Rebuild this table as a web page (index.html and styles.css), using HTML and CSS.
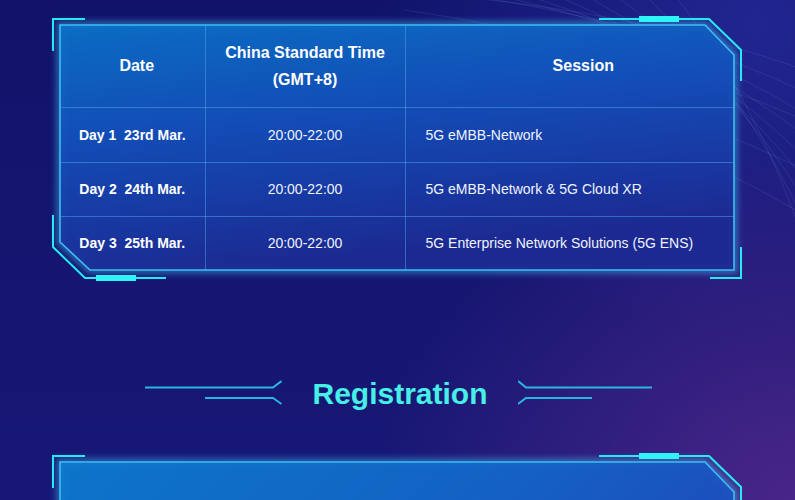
FILE: index.html
```html
<!DOCTYPE html>
<html>

<head>
    <meta charset="utf-8" />
    <title>Schedule</title>
    <link rel="stylesheet" href="styles.css">
</head>

<body>

<div class="page">
    <!-- background streaks -->
    <svg class="streaks" width="420" height="340" viewBox="0 0 420 340">
        <path d="M60 -5 Q260 10 430 70" />
        <path d="M90 -5 Q280 22 430 92" />
        <path d="M120 -5 Q300 34 430 114" />
        <path d="M150 -5 Q315 46 430 136" />
        <path d="M180 -5 Q330 58 430 158" />
        <path d="M210 -5 Q345 70 430 180" />
        <path d="M240 -5 Q360 82 430 202" />
        <path d="M270 -5 Q372 94 430 224" />
        <path d="M300 -5 Q385 106 430 246" />
        <path d="M30 10 Q240 40 430 120" />
        <path d="M0 30 Q220 70 430 170" />
        <path d="M20 60 Q230 100 430 215" />
    </svg>

    <div class="panel">
        <svg class="frame" width="710" height="280" viewBox="0 0 710 280">
            <defs>
                <linearGradient id="fillA" x1="0" y1="0" x2="0.3" y2="1">
                    <stop offset="0" stop-color="#0a72c9" />
                    <stop offset="0.45" stop-color="#134fba" />
                    <stop offset="1" stop-color="#1c2a93" />
                </linearGradient>
                <filter id="blur" x="-10%" y="-10%" width="120%" height="120%">
                    <feGaussianBlur stdDeviation="3" />
                </filter>
            </defs>
            <polygon class="halo" points="20,15 665,15 694,45 694,260 50,260 20,232" />
            <polygon class="body" fill="url(#fillA)" points="20,15 665,15 694,45 694,260 50,260 20,232" />
            <polygon class="edge" points="20,15 665,15 694,45 694,260 50,260 20,232" />
            <polyline class="bracket" points="13,41 13,9 45,9" />
            <polyline class="bracket" points="559,9 669,9 701,40 701,71" />
            <polyline class="bracket" points="13,205 13,237 45,268 126,268" />
            <polyline class="bracket" points="701,237 701,268 670,268" />
            <rect class="tab" x="599" y="6" width="40" height="6" />
            <rect class="tab" x="56" y="265" width="40" height="6" />
        </svg>

        <table class="schedule">
            <colgroup>
                <col class="c1">
                <col class="c2">
                <col class="c3">
            </colgroup>
            <tr class="head">
                <th class="date">Date</th>
                <th>China Standard Time<br>(GMT+8)</th>
                <th class="session">Session</th>
            </tr>
            <tr class="r1">
                <td class="day">Day 1&nbsp;&nbsp;23rd Mar.</td>
                <td class="time">20:00-22:00</td>
                <td class="topic">5G eMBB-Network</td>
            </tr>
            <tr>
                <td class="day">Day 2&nbsp;&nbsp;24th Mar.</td>
                <td class="time">20:00-22:00</td>
                <td class="topic">5G eMBB-Network &amp; 5G Cloud XR</td>
            </tr>
            <tr>
                <td class="day">Day 3&nbsp;&nbsp;25th Mar.</td>
                <td class="time">20:00-22:00</td>
                <td class="topic">5G Enterprise Network Solutions (5G ENS)</td>
            </tr>
        </table>
    </div>

    <div class="heading">
        <svg class="deco" width="137" height="40" viewBox="0 0 137 40">
            <polyline points="0,13.5 128,13.5 136.5,7" />
            <polyline points="60,24 128,24 136.5,30" />
        </svg>
        <h2>Registration</h2>
        <svg class="deco" width="134" height="40" viewBox="0 0 134 40">
            <polyline points="0,7 8,13.5 134,13.5" />
            <polyline points="0,30 8,24 74,24" />
        </svg>
    </div>

    <div class="panel next">
        <svg class="frame" width="710" height="280" viewBox="0 0 710 280">
            <defs>
                <linearGradient id="fillB" x1="0" y1="0" x2="1" y2="0.4">
                    <stop offset="0" stop-color="#0c7bd0" />
                    <stop offset="0.6" stop-color="#1366c8" />
                    <stop offset="1" stop-color="#1b4cbe" />
                </linearGradient>
            </defs>
            <polygon class="halo" points="20,15 665,15 694,45 694,260 50,260 20,232" />
            <polygon class="body" fill="url(#fillB)" points="20,15 665,15 694,45 694,260 50,260 20,232" />
            <polygon class="edge" points="20,15 665,15 694,45 694,260 50,260 20,232" />
            <polyline class="bracket" points="13,41 13,9 45,9" />
            <polyline class="bracket" points="559,9 669,9 701,40 701,71" />
            <rect class="tab" x="599" y="6" width="40" height="6" />
        </svg>
        <div class="blank"></div>
    </div>
</div>

</body>

</html>
```

FILE: styles.css
```css
* {
    padding: 0;
    margin: 0;
    box-sizing: border-box;
}

body {
    background: #13146b;
    font-family: "Liberation Sans", Arial, sans-serif;
}

.page {
    position: relative;
    width: 795px;
    height: 500px;
    overflow: hidden;
    padding-top: 25px;
    background:
        radial-gradient(ellipse 420px 360px at 100% 100%, rgba(82, 40, 140, 0.85), rgba(82, 40, 140, 0) 100%),
        radial-gradient(ellipse 380px 320px at 95% 5%, rgba(40, 45, 160, 0.7), rgba(40, 45, 160, 0) 100%),
        linear-gradient(180deg, #11136a 0%, #171876 100%);
}

.streaks {
    position: absolute;
    right: 0;
    top: 0;
    fill: none;
    stroke: rgba(150, 190, 255, 0.12);
    stroke-width: 1;
}

.panel {
    position: relative;
    width: 674px;
    height: 245px;
    margin-left: 60px;
}

.frame {
    position: absolute;
    left: -20px;
    top: -15px;
}

.frame .body {
    opacity: 0.94;
}

.frame .halo {
    fill: none;
    stroke: #3cc4f6;
    stroke-width: 7;
    opacity: 0.5;
    filter: url(#blur);
}

.frame .edge {
    fill: none;
    stroke: #3cbff2;
    stroke-width: 1.6;
}

.frame .bracket {
    fill: none;
    stroke: #27e9f2;
    stroke-width: 2;
}

.frame .tab {
    fill: #2ff3f6;
}

.schedule {
    position: relative;
    width: 674px;
    table-layout: fixed;
    border-collapse: collapse;
    border-style: hidden;
    color: #fff;
}

.schedule .c1 {
    width: 145px;
}

.schedule .c2 {
    width: 200px;
}

.schedule th,
.schedule td {
    border: 1px solid rgba(80, 165, 240, 0.5);
    text-align: center;
    vertical-align: middle;
}

.schedule th {
    font-size: 16px;
    font-weight: bold;
    line-height: 27px;
}

.schedule .head {
    height: 82px;
}

.schedule tr {
    height: 54px;
}

.schedule .r1 {
    height: 55px;
}

.schedule th.date {
    padding-left: 9px;
}

.schedule th.session {
    padding-left: 27px;
}

.schedule td {
    font-size: 14px;
    color: #eef3ff;
}

.schedule td.day {
    font-weight: bold;
    color: #fff;
}

.schedule td.topic {
    text-align: left;
    padding-left: 20px;
}

.heading {
    display: flex;
    align-items: center;
    justify-content: center;
    gap: 30px;
    height: 40px;
    margin-top: 104px;
    padding-left: 2px;
}

.heading h2 {
    font-size: 30px;
    line-height: 40px;
    font-weight: bold;
    color: #47efe6;
}

.deco {
    fill: none;
    stroke: #2db5e2;
    stroke-width: 2;
}

.next {
    margin-top: 48px;
}

.next .blank {
    position: relative;
    height: 245px;
}
```
